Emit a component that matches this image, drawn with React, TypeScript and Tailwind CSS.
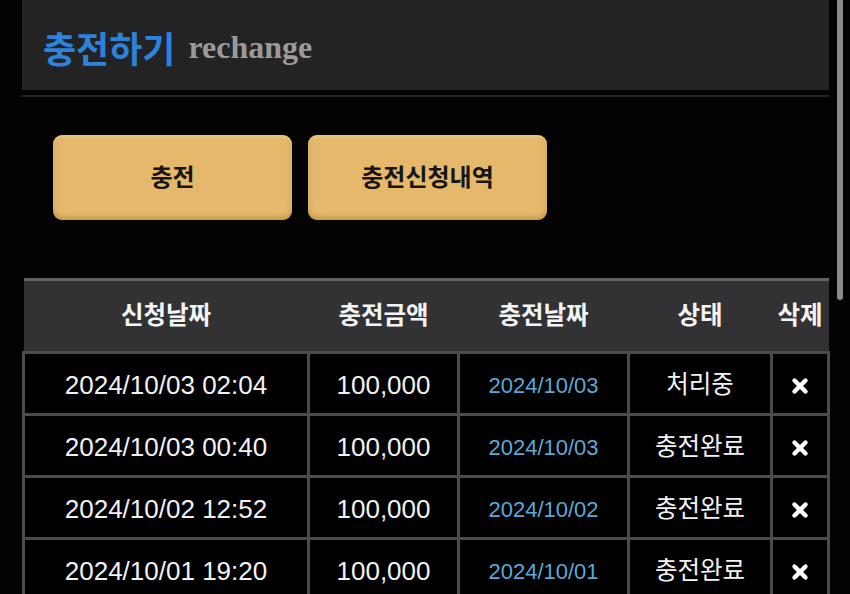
const rows = [
  { requested: "2024/10/03 02:04", amount: "100,000", charged: "2024/10/03", status: "처리중" },
  { requested: "2024/10/03 00:40", amount: "100,000", charged: "2024/10/03", status: "충전완료" },
  { requested: "2024/10/02 12:52", amount: "100,000", charged: "2024/10/02", status: "충전완료" },
  { requested: "2024/10/01 19:20", amount: "100,000", charged: "2024/10/01", status: "충전완료" },
];

const font = "font-['Liberation_Sans','Noto_Sans_CJK_KR',sans-serif]";
const cell = "border-[3px] border-[#4b4b4b] bg-black pt-[4px]";

function DeleteIcon() {
  return (
    <svg width="18" height="18" viewBox="0 0 18 18" className="mx-auto">
      <path d="M3.5 3.5 L14.5 14.5 M14.5 3.5 L3.5 14.5" stroke="#fff" strokeWidth="4.4" strokeLinecap="round" />
    </svg>
  );
}

export default function App() {
  return (
    <div className={`flex h-[594px] w-[850px] overflow-hidden bg-[#030303] ${font}`}>
      <div className="ml-[22px] w-[807px] shrink-0">
        <div className="flex h-[90px] items-center bg-[#232323] pl-[21px] pt-[4px]">
          <h1 className="font-['Noto_Sans_CJK_KR',sans-serif] text-[36px] font-bold leading-none text-[#2d82dc]">충전하기</h1>
          <span className="ml-[13px] font-['Liberation_Serif',serif] text-[32px] font-bold leading-none text-[#9a9a9a]">rechange</span>
        </div>
        <div className="mt-[5px] h-[2px] bg-[#232323]" />

        <div className="mt-[38px] flex gap-[16px] pl-[31px]">
          {["충전", "충전신청내역"].map((label) => (
            <button
              key={label}
              type="button"
              className="h-[85px] w-[239px] rounded-[9px] bg-[#e5b86b] text-[24px] font-bold text-[#161616] shadow-[inset_0_-3px_5px_rgba(120,70,0,0.28),inset_0_2px_3px_rgba(255,235,190,0.35)]"
            >
              {label}
            </button>
          ))}
        </div>

        <table className="mt-[58px] w-[805px] table-fixed border-collapse text-center">
          <colgroup>
            <col className="w-[285px]" />
            <col className="w-[150px]" />
            <col className="w-[170px]" />
            <col className="w-[143px]" />
            <col className="w-[57px]" />
          </colgroup>
          <thead>
            <tr className="border-t-[3px] border-[#626262] bg-[#323234]">
              {["신청날짜", "충전금액", "충전날짜", "상태", "삭제"].map((h) => (
                <th key={h} className="h-[73px] text-[24.5px] font-bold text-[#f4f4f4]">{h}</th>
              ))}
            </tr>
          </thead>
          <tbody>
            {rows.map((row, i) => (
              <tr key={i} className="h-[62px]">
                <td className={`${cell} text-[26px] text-[#f2f2f2]`}>{row.requested}</td>
                <td className={`${cell} text-[26px] text-[#f2f2f2]`}>{row.amount}</td>
                <td className={`${cell} text-[22px] text-[#5ca8d8]`}>{row.charged}</td>
                <td className={`${cell} text-[24.5px] text-[#f2f2f2]`}>{row.status}</td>
                <td className={cell}>
                  <DeleteIcon />
                </td>
              </tr>
            ))}
          </tbody>
        </table>
      </div>
      <div className="ml-[8px] h-[300px] w-[6px] rounded-b-full bg-[#8c8c8c]" />
    </div>
  );
}
